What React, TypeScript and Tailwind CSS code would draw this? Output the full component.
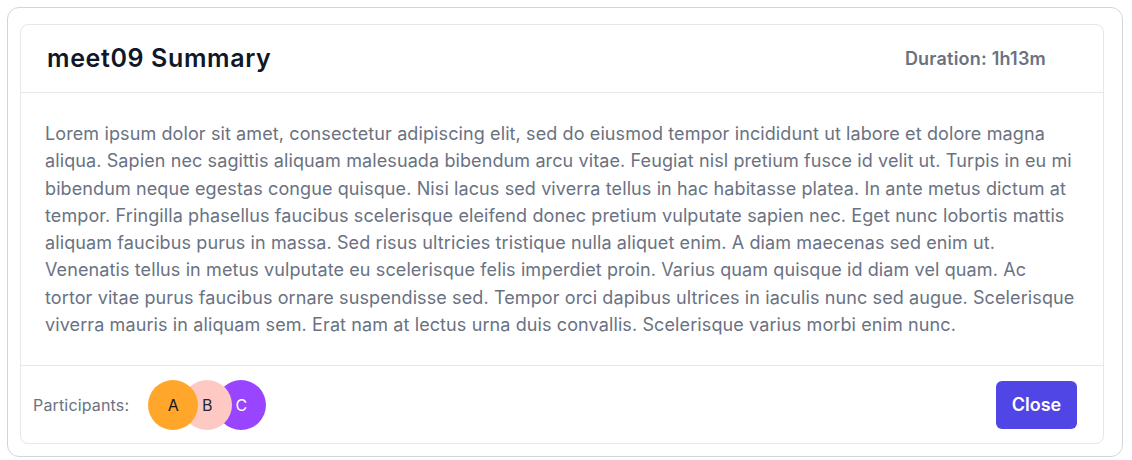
import React from 'react';

const SUMMARY =
  'Lorem ipsum dolor sit amet, consectetur adipiscing elit, sed do eiusmod tempor incididunt ut labore et dolore magna aliqua. Sapien nec sagittis aliquam malesuada bibendum arcu vitae. Feugiat nisl pretium fusce id velit ut. Turpis in eu mi bibendum neque egestas congue quisque. Nisi lacus sed viverra tellus in hac habitasse platea. In ante metus dictum at tempor. Fringilla phasellus faucibus scelerisque eleifend donec pretium vulputate sapien nec. Eget nunc lobortis mattis aliquam faucibus purus in massa. Sed risus ultricies tristique nulla aliquet enim. A diam maecenas sed enim ut. Venenatis tellus in metus vulputate eu scelerisque felis imperdiet proin. Varius quam quisque id diam vel quam. Ac tortor vitae purus faucibus ornare suspendisse sed. Tempor orci dapibus ultrices in iaculis nunc sed augue. Scelerisque viverra mauris in aliquam sem. Erat nam at lectus urna duis convallis. Scelerisque varius morbi enim nunc.';

const participants = [
  { name: 'A', className: 'bg-[#ffa62b] text-gray-900 z-30' },
  { name: 'B', className: 'bg-[#fec8c3] text-gray-800 z-20' },
  { name: 'C', className: 'bg-[#9945ff] text-white z-10' },
];

export default function App() {
  return (
    <div className="p-[7px] font-['Inter',sans-serif]">
      <div className="w-[1116px] h-[450px] rounded-xl border border-gray-300 bg-white pt-4 pl-3 pr-[18px] pb-3">
        <div className="h-[420px] rounded-lg border border-gray-200 bg-white flex flex-col">
          {/* header */}
          <div className="h-[68px] shrink-0 flex items-center justify-between pl-[26px] pr-[57px] border-b border-gray-200">
            <h2 className="text-[25px] tracking-[0.025em] font-semibold text-gray-900">meet09 Summary</h2>
            <span className="text-[18px] tracking-[0.012em] font-semibold text-gray-500">Duration: 1h13m</span>
          </div>

          {/* body */}
          <div className="flex-1 pl-6 pr-[26px] pt-[27px] border-b border-gray-200">
            <p className="text-[18px] tracking-[0.006em] leading-[27.3px] text-gray-500">{SUMMARY}</p>
          </div>

          {/* footer */}
          <div className="h-[77px] shrink-0 flex items-center justify-between pl-3 pr-[26px]">
            <div className="flex items-center">
              <span className="text-[16px] tracking-[0.01em] text-gray-500 mr-[19px]">Participants:</span>
              <div className="flex">
                {participants.map((p, i) => (
                  <div
                    key={p.name}
                    className={`relative w-[50px] h-[50px] rounded-full flex items-center justify-center text-[16px] ${p.className} ${i > 0 ? '-ml-4' : ''}`}
                  >
                    {p.name}
                  </div>
                ))}
              </div>
            </div>
            <button className="w-[81px] h-12 rounded-md bg-[#4f46e5] text-white text-lg font-semibold">
              Close
            </button>
          </div>
        </div>
      </div>
    </div>
  );
}
